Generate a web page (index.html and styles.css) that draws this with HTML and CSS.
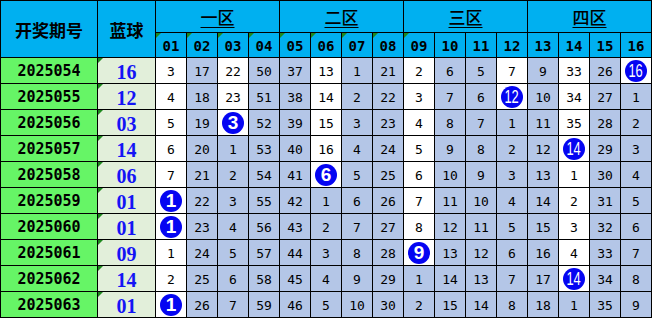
FILE: index.html
```html
<!DOCTYPE html>
<html lang="zh-CN">
<head>
<meta charset="utf-8">
<title>蓝球走势</title>
<link rel="stylesheet" href="styles.css">
</head>
<body>
<div class="sheet">
  <div class="h hc">开奖期号</div>
  <div class="h hc">蓝球</div>
  <div class="h zone">一区</div>
  <div class="h zone">二区</div>
  <div class="h zone">三区</div>
  <div class="h zone">四区</div>
  <div class="h hn t">01</div><div class="h hn t">02</div><div class="h hn t">03</div><div class="h hn t">04</div>
  <div class="h hn t">05</div><div class="h hn t">06</div><div class="h hn t">07</div><div class="h hn t">08</div>
  <div class="h hn t">09</div><div class="h hn">10</div><div class="h hn">11</div><div class="h hn">12</div>
  <div class="h hn">13</div><div class="h hn">14</div><div class="h hn">15</div><div class="h hn">16</div>

  <div class="p">2025054</div><div class="b t">16</div>
  <div class="c w">3</div><div class="c">17</div><div class="c w">22</div><div class="c">50</div>
  <div class="c">37</div><div class="c w">13</div><div class="c">1</div><div class="c">21</div>
  <div class="c w">2</div><div class="c">6</div><div class="c">5</div><div class="c w">7</div>
  <div class="c">9</div><div class="c w">33</div><div class="c">26</div><div class="c w"><span class="ball two"><i>16</i></span></div>

  <div class="p">2025055</div><div class="b t">12</div>
  <div class="c w">4</div><div class="c">18</div><div class="c w">23</div><div class="c">51</div>
  <div class="c">38</div><div class="c w">14</div><div class="c">2</div><div class="c">22</div>
  <div class="c w">3</div><div class="c">7</div><div class="c">6</div><div class="c w"><span class="ball two"><i>12</i></span></div>
  <div class="c">10</div><div class="c w">34</div><div class="c">27</div><div class="c">1</div>

  <div class="p">2025056</div><div class="b t">03</div>
  <div class="c w">5</div><div class="c">19</div><div class="c w"><span class="ball">3</span></div><div class="c">52</div>
  <div class="c">39</div><div class="c w">15</div><div class="c">3</div><div class="c">23</div>
  <div class="c w">4</div><div class="c">8</div><div class="c">7</div><div class="c">1</div>
  <div class="c">11</div><div class="c w">35</div><div class="c">28</div><div class="c">2</div>

  <div class="p">2025057</div><div class="b t">14</div>
  <div class="c w">6</div><div class="c">20</div><div class="c">1</div><div class="c">53</div>
  <div class="c">40</div><div class="c w">16</div><div class="c">4</div><div class="c">24</div>
  <div class="c w">5</div><div class="c">9</div><div class="c">8</div><div class="c">2</div>
  <div class="c">12</div><div class="c w"><span class="ball two"><i>14</i></span></div><div class="c">29</div><div class="c">3</div>

  <div class="p">2025058</div><div class="b t">06</div>
  <div class="c w">7</div><div class="c">21</div><div class="c">2</div><div class="c">54</div>
  <div class="c">41</div><div class="c w"><span class="ball">6</span></div><div class="c">5</div><div class="c">25</div>
  <div class="c w">6</div><div class="c">10</div><div class="c">9</div><div class="c">3</div>
  <div class="c">13</div><div class="c w">1</div><div class="c">30</div><div class="c">4</div>

  <div class="p">2025059</div><div class="b t">01</div>
  <div class="c w"><span class="ball">1</span></div><div class="c">22</div><div class="c">3</div><div class="c">55</div>
  <div class="c">42</div><div class="c">1</div><div class="c">6</div><div class="c">26</div>
  <div class="c w">7</div><div class="c">11</div><div class="c">10</div><div class="c">4</div>
  <div class="c">14</div><div class="c w">2</div><div class="c">31</div><div class="c">5</div>

  <div class="p">2025060</div><div class="b t">01</div>
  <div class="c w"><span class="ball">1</span></div><div class="c">23</div><div class="c">4</div><div class="c">56</div>
  <div class="c">43</div><div class="c">2</div><div class="c">7</div><div class="c">27</div>
  <div class="c w">8</div><div class="c">12</div><div class="c">11</div><div class="c">5</div>
  <div class="c">15</div><div class="c w">3</div><div class="c">32</div><div class="c">6</div>

  <div class="p">2025061</div><div class="b t">09</div>
  <div class="c w">1</div><div class="c">24</div><div class="c">5</div><div class="c">57</div>
  <div class="c">44</div><div class="c">3</div><div class="c">8</div><div class="c">28</div>
  <div class="c w"><span class="ball">9</span></div><div class="c">13</div><div class="c">12</div><div class="c">6</div>
  <div class="c">16</div><div class="c w">4</div><div class="c">33</div><div class="c">7</div>

  <div class="p">2025062</div><div class="b t">14</div>
  <div class="c w">2</div><div class="c">25</div><div class="c">6</div><div class="c">58</div>
  <div class="c">45</div><div class="c">4</div><div class="c">9</div><div class="c">29</div>
  <div class="c">1</div><div class="c">14</div><div class="c">13</div><div class="c">7</div>
  <div class="c">17</div><div class="c w"><span class="ball two"><i>14</i></span></div><div class="c">34</div><div class="c">8</div>

  <div class="p">2025063</div><div class="b t">01</div>
  <div class="c w"><span class="ball">1</span></div><div class="c">26</div><div class="c">7</div><div class="c">59</div>
  <div class="c">46</div><div class="c">5</div><div class="c">10</div><div class="c">30</div>
  <div class="c">2</div><div class="c">15</div><div class="c">14</div><div class="c">8</div>
  <div class="c">18</div><div class="c">1</div><div class="c">35</div><div class="c">9</div>
</div>
</body>
</html>
```

FILE: styles.css
```css
html, body {
  margin: 0;
  padding: 0;
  background: #ffffff;
}

.sheet {
  display: grid;
  grid-template-columns: 96px 57px repeat(16, 30px);
  grid-template-rows: 31px 24px repeat(10, 25px);
  gap: 1px;
  padding: 1px;
  background: #000000;
  width: max-content;
}

.sheet > div {
  display: flex;
  align-items: center;
  justify-content: center;
  position: relative;
  color: #000000;
  line-height: 1;
}

.h {
  background: #00b0f0;
}

.hc {
  grid-row: span 2;
  font: 700 17px "Noto Sans CJK SC", sans-serif;
  padding-top: 1px;
}

.zone {
  grid-column: span 4;
  font: 500 17px "Noto Sans CJK SC", sans-serif;
  text-decoration: underline;
  text-underline-offset: 3px;
  text-decoration-thickness: 1px;
}

.hn {
  font: 700 14px "DejaVu Sans Mono", monospace;
  padding-top: 2px;
}

.p {
  background: #66f566;
  font: 700 15px "DejaVu Sans Mono", monospace;
  padding-top: 2px;
}

.b {
  background: #e2efda;
  font: 700 20px "Liberation Serif", serif;
  padding-top: 2px;
}

.sheet > .b {
  color: #1414f5;
}

.c {
  background: #b4c6e7;
  font: 400 13px "DejaVu Sans Mono", monospace;
  padding-top: 2px;
}

.c.w {
  background: #ffffff;
}

.t::before {
  content: "";
  position: absolute;
  left: 0;
  top: 0;
  width: 0;
  height: 0;
  border-top: 5px solid #1e8a1e;
  border-right: 5px solid transparent;
}

.ball {
  width: 22px;
  height: 22px;
  margin-top: -2px;
  border-radius: 50%;
  background: #0505f2;
  color: #ffffff;
  font: 700 19px "Liberation Sans", sans-serif;
  display: flex;
  align-items: center;
  justify-content: center;
}

.ball i {
  font-style: normal;
  display: inline-block;
  transform: scaleX(0.68);
}

.ball.two {
  font-size: 19px;
  font-weight: 400;
}
```
